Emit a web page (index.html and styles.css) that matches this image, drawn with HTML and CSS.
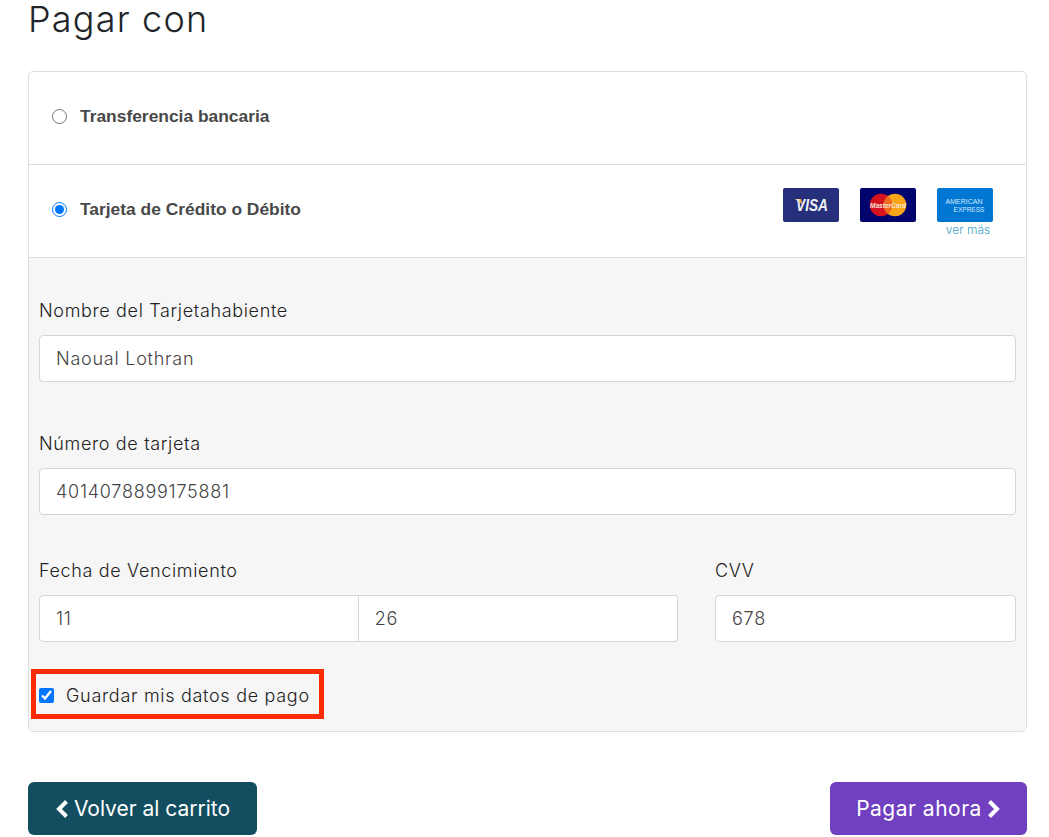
FILE: index.html
```html
<!DOCTYPE html>
<html lang="es">
<head>
<meta charset="utf-8">
<title>Pagar con</title>
<link rel="stylesheet" href="styles.css">
</head>
<body>
<main class="page">
  <h1 class="title">Pagar con</h1>
  <section class="card">
    <div class="method method-first">
      <label class="method-label"><input type="radio" name="pay" class="radio"><span>Transferencia bancaria</span></label>
    </div>
    <div class="method">
      <label class="method-label"><input type="radio" name="pay" class="radio" checked><span>Tarjeta de Crédito o Débito</span></label>
      <div class="brands">
        <div class="brand-row">
          <svg class="brand" viewBox="0 0 56 34" width="56" height="34">
            <rect width="56" height="34" rx="2" fill="#262f7c"/>
            <path d="M11.500 11h6.500l2 5.500z" fill="#f0a73a"/>
            <text x="13" y="22.500" textLength="32" lengthAdjust="spacingAndGlyphs" class="visa-text">VISA</text>
          </svg>
          <svg class="brand" viewBox="0 0 56 34" width="56" height="34">
            <rect width="56" height="34" rx="2" fill="#02046e"/>
            <circle cx="21" cy="17" r="11.300" fill="#d5121e"/>
            <circle cx="35" cy="17" r="11.300" fill="#f9a51a"/>
            <path d="M28 8.100a11.300 11.300 0 0 1 0 17.800a11.300 11.300 0 0 1 0-17.800z" fill="#ef6a1c"/>
            <text x="10" y="19.500" textLength="36" lengthAdjust="spacingAndGlyphs" class="mc-text">MasterCard</text>
          </svg>
          <svg class="brand" viewBox="0 0 56 34" width="56" height="34">
            <rect width="56" height="34" rx="2" fill="#0177d4"/>
            <text x="8.500" y="15.500" textLength="37" lengthAdjust="spacingAndGlyphs" class="amex-text">AMERICAN</text>
            <text x="16.500" y="23.500" textLength="31" lengthAdjust="spacingAndGlyphs" class="amex-text">EXPRESS</text>
          </svg>
        </div>
        <a class="more" href="#">ver más</a>
      </div>
    </div>
    <form class="panel">
      <div class="field field-name">
        <label class="label" for="holder">Nombre del Tarjetahabiente</label>
        <input class="input" id="holder" value="Naoual Lothran">
      </div>
      <div class="field field-number">
        <label class="label" for="number">Número de tarjeta</label>
        <input class="input" id="number" value="4014078899175881">
      </div>
      <div class="split">
        <div class="field">
          <label class="label" for="month">Fecha de Vencimiento</label>
          <div class="group">
            <input class="input input-left" id="month" value="11">
            <input class="input input-right" value="26">
          </div>
        </div>
        <div class="field">
          <label class="label" for="cvv">CVV</label>
          <input class="input" id="cvv" value="678">
        </div>
      </div>
      <div class="save">
        <input type="checkbox" class="check" id="save" checked>
        <label class="save-label" for="save">Guardar mis datos de pago</label>
        <span class="highlight"></span>
      </div>
    </form>
  </section>
  <div class="actions">
    <a class="btn btn-back" href="#">
      <svg class="chev" viewBox="0 0 14 18" width="14" height="18"><path d="M11.500 1.500 4 9l7.500 7.500" fill="none" stroke="#fff" stroke-width="4"/></svg>
      <span>Volver al carrito</span>
    </a>
    <a class="btn btn-pay" href="#">
      <span>Pagar ahora</span>
      <svg class="chev" viewBox="0 0 14 18" width="14" height="18"><path d="M2.500 1.500 10 9l-7.500 7.500" fill="none" stroke="#fff" stroke-width="4"/></svg>
    </a>
  </div>
</main>
</body>
</html>
```
FILE: styles.css
```css
* { box-sizing: border-box; }
html, body { margin: 0; padding: 0; background: #fff; }
body { height: 837px; overflow: hidden; font-family: "Inter", "Liberation Sans", sans-serif; color: #212529; }
.page { padding: 0 22px 0 28px; }
.title { margin: 0; height: 71px; font-size: 36px; line-height: 38px; font-weight: 300; letter-spacing: 1.2px; color: #212529; }
.card { border: 1px solid #dfdfdf; border-radius: 5px; height: 661px; overflow: hidden; }
.method { height: 93px; display: flex; align-items: center; justify-content: space-between; border-bottom: 1px solid #dfdfdf; padding: 0 33px 0 23px; }
.method-label { display: flex; align-items: center; gap: 13px; font-family: "Liberation Sans", Arial, sans-serif; font-weight: 700; font-size: 17.4px; line-height: 20px; color: #484848; margin-bottom: 4px; }
.radio { margin: 0; width: 15px; height: 15px; accent-color: #0075ff; }
.brands { display: flex; flex-direction: column; align-items: center; padding-top: 2px; }
.brand-row { display: flex; gap: 21px; }
.brand { display: block; }
.more { align-self: flex-end; width: 56px; padding-left: 6px; text-align: center; font-size: 12px; font-weight: 300; line-height: 15px; color: #3f9fca; text-decoration: none; }
.visa-text { font: italic 700 16px "Liberation Sans", sans-serif; fill: #eef0f6; }
.mc-text { font: italic 700 7px "Liberation Sans", sans-serif; fill: #f7e6dc; }
.amex-text { font: 400 6.500px "Liberation Sans", sans-serif; fill: #d3e8f9; }
.panel { background: #f6f6f6; padding: 41px 10px 0; height: 474px; }
.field { display: flex; flex-direction: column; }
.field-name { height: 133px; }
.field-number { height: 127px; }
.label { font-size: 18px; line-height: 24px; margin-bottom: 12px; letter-spacing: .65px; font-weight: 300; color: #222; }
.input { height: 47px; line-height: 44px; width: 100%; border: 1px solid #d3d6da; border-radius: 4px; background: #fff; padding: 0 16px 1px; font: 300 18px "Inter", sans-serif; letter-spacing: .75px; color: #444; outline: none; }
.split { display: grid; grid-template-columns: 639px 301px; gap: 37px; }
.group { display: flex; }
.input-left { border-radius: 4px 0 0 4px; }
.input-right { border-radius: 0 4px 4px 0; border-left: 0; }
.save { position: relative; display: flex; align-items: center; gap: 12px; margin-top: 41px; height: 24px; }
.check { margin: 0; width: 15px; height: 15px; accent-color: #0075ff; }
.save-label { font-size: 18px; letter-spacing: .7px; font-weight: 300; color: #222; }
.highlight { position: absolute; left: -8px; top: -14px; width: 293px; height: 50px; border: 5px solid #fb2c03; pointer-events: none; }
.actions { display: flex; justify-content: space-between; margin-top: 50px; }
.btn { display: flex; align-items: center; justify-content: center; gap: 5px; height: 53px; border-radius: 6px; color: #fff; text-decoration: none; font-size: 21px; font-weight: 400; }
.btn-back { width: 229px; background: #124e60; }
.btn-pay { width: 197px; background: #7040c0; letter-spacing: .5px; }
.chev { display: block; }
```
